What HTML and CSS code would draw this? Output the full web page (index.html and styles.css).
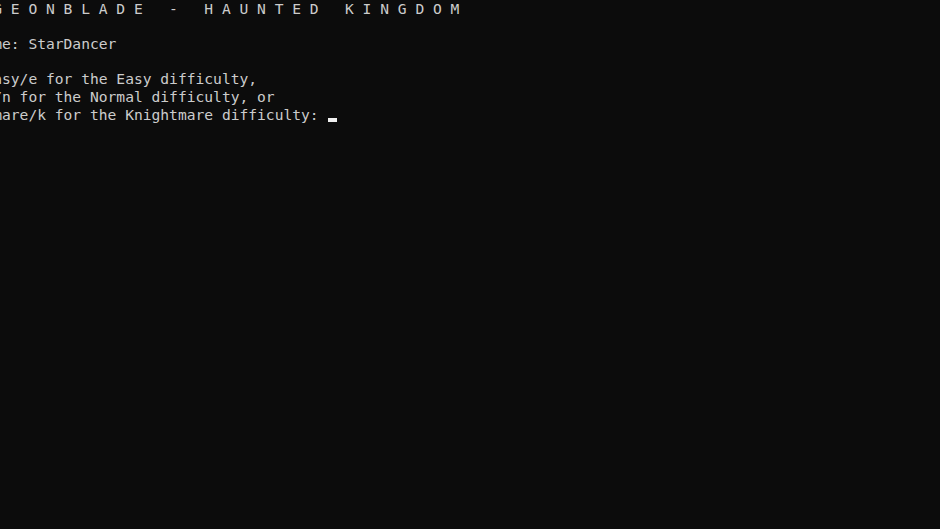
FILE: index.html
```html
<!DOCTYPE html>
<html lang="en">
<head>
<meta charset="utf-8">
<title>Console</title>
<link rel="stylesheet" href="styles.css">
</head>
<body>
<main class="console">
<pre class="output">G E O N B L A D E   -   H A U N T E D   K I N G D O M

me: StarDancer

asy/e for the Easy difficulty,
/n for the Normal difficulty, or
mare/k for the Knightmare difficulty: <span class="cursor"></span></pre>
</main>
</body>
</html>
```
FILE: styles.css
```css
html, body {
  margin: 0;
  padding: 0;
  width: 100%;
  height: 100%;
  background: #0c0c0c;
  overflow: hidden;
}

.console {
  width: 100%;
  height: 100%;
  background: #0c0c0c;
  overflow: hidden;
}

.output {
  margin: 0 0 0 -6.8px;
  padding: 0;
  font-family: "DejaVu Sans Mono", monospace;
  font-size: 14.62px;
  line-height: 17.6px;
  color: #cccccc;
  white-space: pre;
}

.cursor {
  display: inline-block;
  width: 9px;
  height: 4px;
  margin-left: 1px;
  background: #f0f0f0;
  vertical-align: -2px;
}
```
